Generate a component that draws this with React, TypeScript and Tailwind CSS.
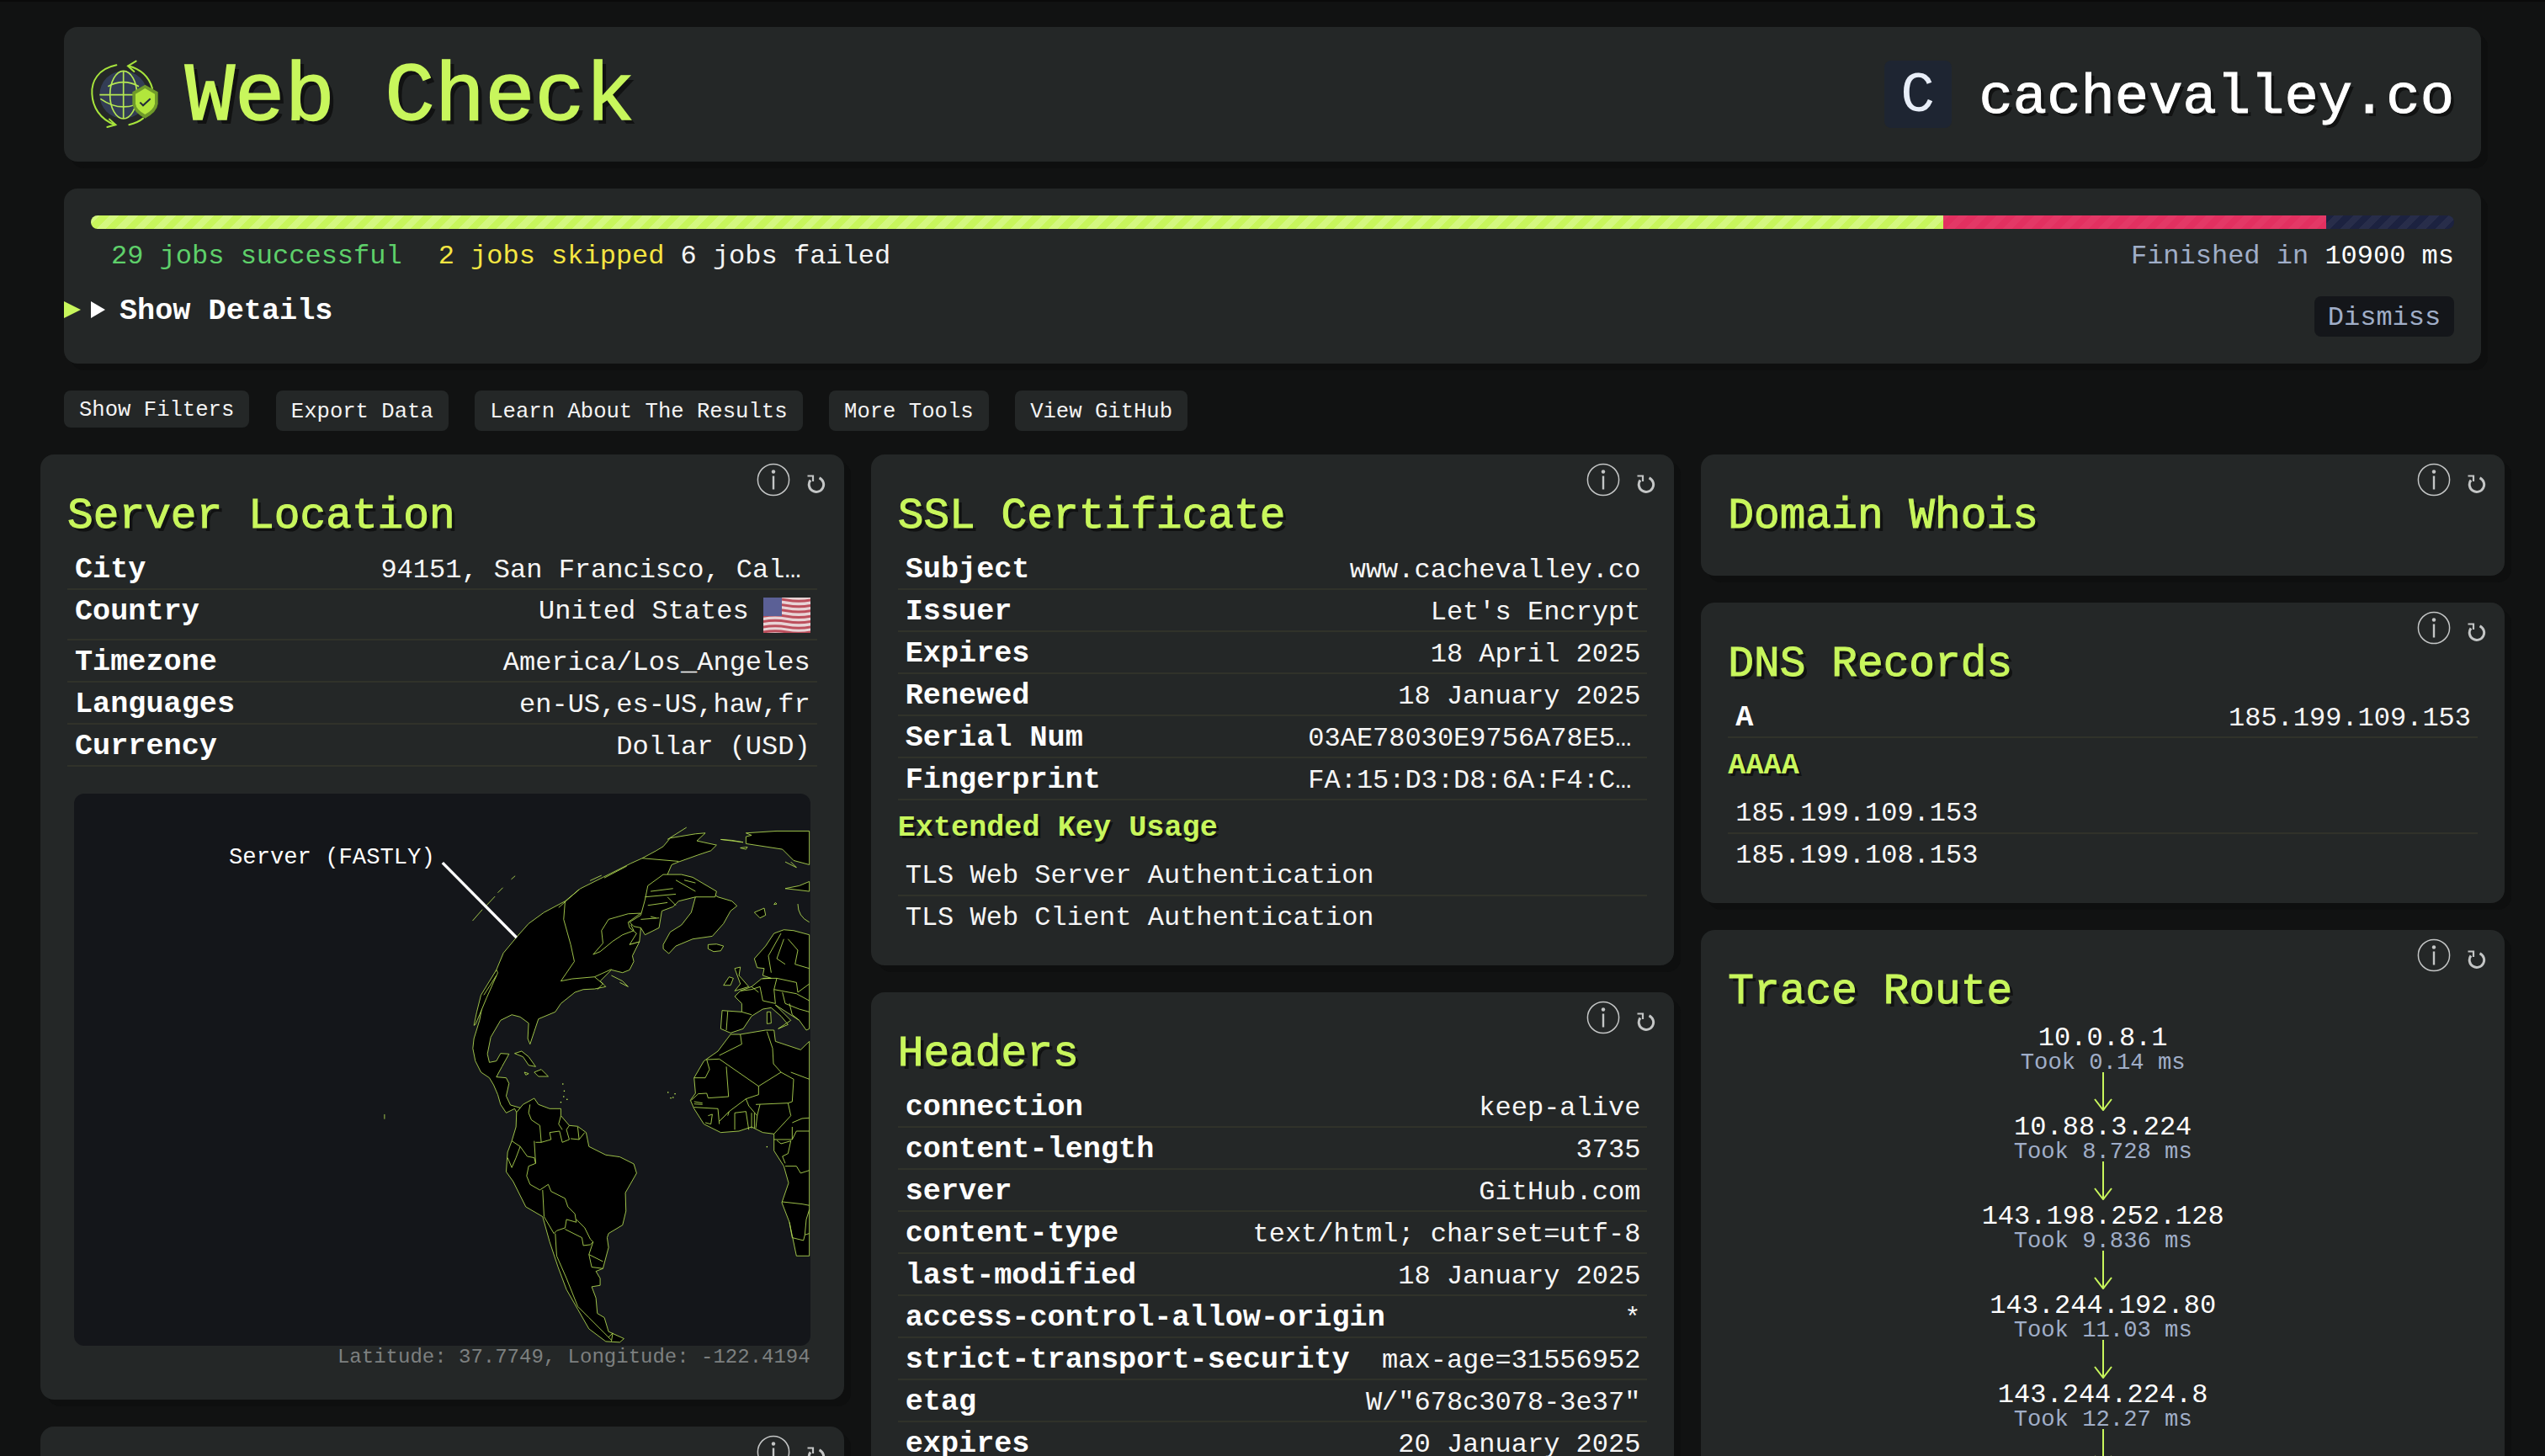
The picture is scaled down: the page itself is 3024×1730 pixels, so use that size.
import React from "react";

const MONO = "font-['Liberation_Mono',monospace]";

function CardIcons() {
  return (
    <>
      <svg viewBox="0 0 40 40" className="absolute right-[64px] top-[10px] h-[40px] w-[40px]">
        <circle cx="20" cy="20" r="18.6" fill="none" stroke="#c4c6c6" strokeWidth="1.5" />
        <circle cx="20" cy="10.5" r="2.2" fill="#c4c6c6" />
        <rect x="18.8" y="15.5" width="2.4" height="16" fill="#c4c6c6" />
      </svg>
      <svg viewBox="0 0 24 24" className="absolute right-[21px] top-[22px] h-[24px] w-[24px]">
        <path d="M15.5 5.8 A8.7 8.7 0 1 1 5 8.5" fill="none" stroke="#c4c6c6" strokeWidth="3" />
        <path d="M1.5 3.5 H8 V10" fill="none" stroke="#c4c6c6" strokeWidth="2.2" />
      </svg>
    </>
  );
}

function Row({ k, v, last, tall, cut }: { k?: string; v?: string; last?: boolean; tall?: boolean; cut?: boolean }) {
  return (
    <div
      className={`flex items-baseline justify-between pl-[9px] pr-[8px] pt-[8px] text-[32px] leading-[36px] text-[#f6f6f6] ${
        last ? "" : "border-b-2 border-[#30322a]"
      } ${tall ? "h-[60px]" : "h-[50px]"}`}
    >
      {k && <span className="text-[35.2px] font-bold text-white">{k}</span>}
      <span className={cut ? "mr-[11px]" : ""}>{v}</span>
    </div>
  );
}

function Card({ title, children, className }: { title?: string; children?: React.ReactNode; className?: string }) {
  return (
    <div className={`relative rounded-[16px] bg-[#242727] px-[32px] pb-[32px] shadow-[8px_8px_0_#0e0f0f] ${className ?? ""}`}>
      <CardIcons />
      <div className="h-[111px] pt-[44px]">
        {title && (
          <h2 className="text-[51.2px] leading-[58px] text-[#c8f65c] [-webkit-text-stroke:1px_#c8f65c] [text-shadow:4px_4px_0_#111212]">{title}</h2>
        )}
      </div>
      {children}
    </div>
  );
}

function SubHead({ children }: { children: React.ReactNode }) {
  return (
    <div className="flex h-[64px] items-center pt-[2px]">
      <h3 className="text-[35.2px] font-bold leading-[40px] text-[#c8f65c] [text-shadow:3px_3px_0_#111212]">{children}</h3>
    </div>
  );
}

function Logo() {
  return (
    <svg viewBox="75 90 260 250" className="h-[83.3px] w-[86.7px] shrink-0">
      <circle cx="200" cy="218" r="85" fill="#333d55" />
      <g fill="none" stroke="#b5e853" strokeWidth="5">
        <line x1="200" y1="133" x2="200" y2="303" />
        <ellipse cx="200" cy="218" rx="48" ry="85" />
        <line x1="115" y1="218" x2="285" y2="218" />
        <path d="M145 188 Q200 158 255 188" />
        <path d="M118 232 Q200 290 282 232" />
      </g>
      <g fill="none" stroke="#a7e43c" strokeWidth="6" strokeLinecap="round">
        <path d="M175 112 C110 125 85 170 88 215 C90 260 115 305 170 325" />
        <path d="M150 305 L172 325 L142 333" />
        <path d="M218 115 C255 125 290 150 303 195" />
        <path d="M245 98 L216 115 L238 135" />
        <path d="M220 325 C240 320 258 312 270 302" />
      </g>
      <path d="M277 182 L323 208 V250 Q320 280 277 302 Q235 280 232 250 V208 Z" fill="#6f9a2a" />
      <path d="M277 195 L312 215 V250 Q308 272 277 288 Q246 272 243 250 V215 Z" fill="#b2e63c" />
      <path d="M259 245 L270 256 L296 232" fill="none" stroke="#222a3a" strokeWidth="6" />
    </svg>
  );
}

function Flag() {
  return (
    <svg viewBox="0 0 56 42" className="absolute right-[8px] top-[9px] h-[42px] w-[56px]">
      <rect width="56" height="42" fill="#e8d4d6" />
      {[0, 6.4, 12.8, 19.2, 25.6, 32, 38].map((y) => (
        <path key={y} d={`M0 ${y + 1.5} Q14 ${y - 1} 28 ${y + 1.5} T56 ${y + 1.5} V${y + 4.5} Q42 ${y + 7} 28 ${y + 4.5} T0 ${y + 4.5} Z`} fill="#bc4f5c" />
      ))}
      <rect width="22" height="22" fill="#5b6096" />
    </svg>
  );
}

const LAND = [
  // hudson bay area, filled
  "M495 525 L625 490 L660 480 L668 400 L620 380 L550 400 L525 440 L530 485 Z",
  // north america
  "M670 182 L630 200 L530 250 L450 290 L395 335 L320 375 L265 415 L225 460 L175 520 L150 580 L105 680 L90 760 L70 825 L66 860 L75 905 L95 945 L125 965 L140 990 L155 1025 L165 1060 L185 1090 L215 1075 L226 1095 L235 1072 L200 1062 L185 1030 L195 985 L185 965 L150 962 L170 925 L195 880 L165 878 L150 905 L125 910 L118 880 L130 820 L165 760 L205 740 L235 748 L265 770 L262 825 L270 845 L285 800 L300 755 L360 730 L380 700 L430 660 L460 650 L500 648 L540 640 L520 620 L560 580 L600 590 L625 580 L640 550 L635 530 L660 480 L625 490 L650 450 L625 430 L620 410 L665 378 L620 380 L550 400 L525 440 L530 485 L495 525 L520 515 L565 478 L600 455 L640 440 L630 420 L668 400 L680 340 L700 300 L760 240 L775 205 L800 195 L870 170 L915 155 L935 135 L865 120 L895 92 L860 95 L770 110 L745 140 L720 155 Z",
  // greenland
  "M745 505 L765 522 L790 495 L850 470 L920 460 L960 415 L985 370 L1008 352 L990 335 L940 320 L900 295 L860 320 L845 375 L810 420 L770 445 L745 490 Z",
  // europe
  "M1266 455 L1210 440 L1175 437 L1140 450 L1110 495 L1070 540 L1080 572 L1105 575 L1100 600 L1130 610 L1095 612 L1060 640 L1020 655 L1000 675 L1025 700 L1025 730 L955 725 L950 790 L985 805 L1030 790 L1060 745 L1100 720 L1130 715 L1165 745 L1190 775 L1155 790 L1200 760 L1145 705 L1230 760 L1255 795 L1266 790 Z",
  // africa
  "M985 810 L1020 810 L1110 795 L1140 795 L1145 835 L1235 865 L1266 835 L1266 1600 L1220 1600 L1195 1480 L1168 1410 L1192 1340 L1175 1280 L1140 1225 L1140 1165 L1100 1160 L1060 1140 L1015 1155 L950 1160 L890 1130 L855 1075 L842 1045 L860 1020 L855 965 L890 905 L940 870 Z",
  // south america
  "M222 1088 L245 1060 L285 1038 L300 1060 L340 1075 L380 1075 L380 1100 L410 1135 L440 1138 L470 1160 L480 1210 L540 1240 L590 1247 L640 1272 L650 1305 L610 1375 L612 1440 L600 1490 L550 1520 L545 1535 L550 1570 L530 1645 L505 1655 L520 1680 L520 1705 L490 1710 L505 1750 L510 1805 L535 1820 L550 1870 L605 1895 L590 1908 L540 1905 L480 1860 L440 1790 L400 1720 L370 1640 L340 1550 L315 1460 L255 1425 L210 1335 L185 1300 L190 1230 L205 1190 L220 1140 Z",
  // russia top
  "M1040 92 L1060 100 L1040 105 L1040 130 L1170 150 L1210 190 L1266 205 L1266 85 L1150 85 Z",
  // arctic islands
  "M690 280 L745 240 L810 240 L850 250 L935 300 L930 320 L860 320 L800 335 L780 355 L740 370 L730 430 L680 455 L665 430 L640 425 L625 410 L665 385 L680 330 Z",
  "M905 490 L935 488 L960 495 L950 512 L925 515 L905 505 Z",
  "M215 878 L240 870 L265 890 L290 925 L265 920 L245 890 Z",
  "M285 945 L310 935 L335 960 L300 960 Z",
  "M250 945 L265 950 L255 955 Z",
  "M1000 575 L1020 570 L1015 600 L1050 640 L1000 655 L1020 630 Z",
  "M960 635 L980 605 L995 610 L985 635 Z",
  "M1070 375 L1105 360 L1110 385 L1090 395 Z",
  "M950 115 L1030 125 L990 118 Z",
  "M1180 290 L1230 280 L1266 265 L1266 300 L1225 295 Z",
  "M1115 730 L1128 730 L1130 770 L1115 772 Z",
  "M1145 340 L1150 345 L1140 347 Z",
  "M1020 145 L1045 142 L1040 150 Z",
  "M70 778 L80 730 L95 670 L150 580 L155 590 L115 680 L90 740 L75 775 Z",
];

const LINES = [
  "M395 335 L390 400 L415 490 L428 550 L380 620 L420 612 L500 605 L560 578",
  "M670 182 L800 193",
  "M500 605 L530 630 L510 650",
  "M560 600 L600 620 L620 640 L590 625",
  "M105 670 L150 600",
  "M700 300 L780 290 M680 320 L790 310 M760 320 L790 350 M790 260 L860 300 M820 260 L860 270 M690 350 L760 340 M665 400 L730 395 M700 390 L720 395",
  "M1165 450 L1120 530 L1130 590 M1175 470 L1150 540 L1180 560 M1190 470 L1225 510 L1215 560 L1266 575",
  "M1100 610 L1150 610 L1220 625 L1225 660 L1266 630 M1090 640 L1100 690 L1145 700 L1140 650 L1220 665 L1266 690 M1150 610 L1140 650 M1170 660 L1180 700 L1230 720 L1266 730 M1195 700 L1205 740 L1230 760",
  "M1025 730 L1060 740 M975 728 L970 795 M1020 655 L1060 650 L1090 640 M1060 640 L1085 660",
  // africa
  "M945 898 L900 900 L910 935 L895 965 L855 965 M945 898 L1085 995 L1165 945 L1210 970 L1205 1050 L1190 1055 L1200 1100 L1140 1165",
  "M970 925 L978 1032 L905 1037 L900 1020 L870 1022 L845 1045",
  "M1085 995 L1085 1025 L1040 1040 L980 1085 L975 1100 M1040 1040 L1050 1065 L1080 1100 L1075 1145 M1020 810 L1025 845 L945 885 M1115 800 L1135 860 L1138 915 L1165 945 M1200 945 L1266 970",
  "M855 1070 L940 1075 L945 1130 M905 1100 L920 1095 L915 1130 L895 1125 M1000 1090 L1000 1150 M1000 1090 L1040 1085 L1050 1150 M1060 1090 L1060 1145 M1070 1090 L1070 1145 M1075 1060 L1190 1055 M1080 1100 L1090 1060",
  "M945 1120 L980 1085 M855 1050 L885 1055 M855 1058 L885 1060",
  "M1140 1185 L1205 1185 L1220 1155 L1266 1155 M1150 1188 L1165 1200 L1200 1190 L1190 1235 L1170 1245 L1180 1270 M1180 1280 L1220 1280 L1235 1305 L1266 1295 M1168 1407 L1240 1415 L1266 1420 M1266 1435 L1255 1470 L1250 1525 L1266 1520 M1195 1480 L1205 1535 L1245 1545 L1250 1525 M1205 1125 L1240 1110 L1266 1108 M1205 1185 L1205 1140",
  // south america
  "M205 1190 L235 1210 L220 1250 L205 1285 L190 1250 M235 1210 L260 1245 L285 1250 L290 1270 L265 1280 L258 1315 L270 1345 L305 1365 L335 1345 L345 1370 L395 1395 L405 1425 L430 1450 L435 1480 L400 1470 L395 1500 L365 1510 L355 1520",
  "M395 1505 L455 1535 L460 1563 L485 1560 L495 1550 L480 1595 L530 1620 M480 1595 L490 1640 L530 1645 M315 1365 L320 1460 L355 1520 M360 1520 L365 1600 L400 1680 L440 1780 L480 1820 L535 1875 L560 1900 M435 1470 L465 1500 L485 1540 L495 1550",
  "M270 1060 L265 1090 L275 1115 L305 1135 L310 1195 L345 1185 L340 1160 L375 1155 L385 1195 L410 1185 L400 1150 L410 1135 M380 1100 L372 1130 L385 1150 M290 1195 L310 1195 M285 1190 L290 1270 M415 1182 L445 1185 L440 1140 M445 1185 L465 1160",
  "M550 1890 L565 1875 L560 1905",
  // globe edge streaks
  "M65 405 L100 365 M115 350 L145 318 M155 305 L173 287 M203 257 L217 245",
  "M-249 1095 L-249 1112",
  "M484 262 L525 243 M535 252 L615 210 M372 358 L445 293 M760 115 L828 72",
  "M1225 345 Q1225 390 1266 410",
  "M1180 195 L1220 215 L1200 195",
];

const DOTS: [number, number][] = [
  [385, 985], [390, 1010], [388, 1030], [400, 1040], [378, 1050], [760, 1015], [785, 1020], [770, 1035], [778, 1033], [1113, 1209],
];

function WorldMap() {
  return (
    <div className="relative mx-[8px] h-[656px] overflow-hidden rounded-[12px] bg-[#14161a]">
      <svg viewBox="0 0 875 656" className="absolute inset-0 h-full w-full">
        <g transform="translate(452 16) scale(0.33333)">
          <path d="M495 525 L625 490 L660 480 L668 400 L620 380 L550 400 L525 440 L530 485 Z" fill="#000" />
          {LAND.map((d, i) => (
            <path key={i} d={d} fill="#000" stroke="#b4dc54" strokeWidth="2.6" strokeLinejoin="round" />
          ))}
          {LINES.map((d, i) => (
            <path key={i} d={d} fill="none" stroke="#b4dc54" strokeWidth="2.6" />
          ))}
          {DOTS.map(([x, y], i) => (
            <rect key={i} x={x} y={y} width="4" height="4" fill="#c8f65c" />
          ))}
        </g>
        <line x1="438" y1="82" x2="526" y2="171" stroke="#fff" strokeWidth="3.4" />
      </svg>
      <span className="absolute left-[184px] top-[60px] text-[27.2px] leading-[32px] text-white">Server (FASTLY)</span>
    </div>
  );
}

function Hop({ ip, ms }: { ip: string; ms: string }) {
  return (
    <div className="flex flex-col items-center">
      <div className="h-[32px] text-[32px] leading-[36px] text-white">{ip}</div>
      <div className="h-[28px] text-[27.2px] leading-[30px] text-[#a0aec8]">{ms}</div>
      <svg viewBox="0 0 24 46" className="-mt-[2px] h-[46px] w-[24px]">
        <line x1="12" y1="0" x2="12" y2="44" stroke="#c8f65c" strokeWidth="2" />
        <path d="M2 32 L12 45 L22 32" fill="none" stroke="#c8f65c" strokeWidth="2" />
      </svg>
      <div className="h-[2px]" />
    </div>
  );
}

const BTN = "flex items-center rounded-[8px] bg-[#242727] px-[18px] pt-[4px]";

export default function App() {
  return (
    <div className={`h-[1730px] w-[3024px] overflow-hidden bg-[#111212] ${MONO}`}>
      <div className="h-[2px] bg-[#0a0a0a]" />
      <div className="mx-[76px] mt-[30px] flex h-[160px] items-center justify-between rounded-[16px] bg-[#242727] pl-[29px] pr-[32px] shadow-[8px_8px_0_#0e0f0f]">
        <div className="flex items-center">
          <Logo />
          <h1 className="ml-[28px] mt-[8px] text-[99px] leading-[110px] text-[#c8f65c] [-webkit-text-stroke:1.5px_#c8f65c] [text-shadow:5px_5px_0_#111212]">Web Check</h1>
        </div>
        <div className="flex items-center">
          <div className="flex h-[80px] w-[80px] items-center justify-center rounded-[8px] bg-[#1e2532] pt-[4px] text-[68px] leading-[80px] text-[#e8eef8]">C</div>
          <div className="ml-[33px] mt-[8px] text-[67.2px] leading-[80px] text-white [-webkit-text-stroke:1px_#fff] [text-shadow:4px_4px_0_#111212]">cachevalley.co</div>
        </div>
      </div>

      <div className="mx-[76px] mt-[32px] h-[208px] rounded-[16px] bg-[#242727] pt-[32px] shadow-[8px_8px_0_#0e0f0f]">
        <div className="mx-[32px] flex h-[16px] overflow-hidden rounded-[8px]">
          <div className="h-full w-[2201px] bg-[#c8f65c] bg-[repeating-linear-gradient(-45deg,transparent_0_8px,rgba(255,255,255,0.22)_8px_16px)]" />
          <div className="h-full w-[455px] bg-[#e23060] bg-[repeating-linear-gradient(-45deg,transparent_0_8px,rgba(255,255,255,0.04)_8px_16px)]" />
          <div className="h-full flex-1 bg-[#1c2240] bg-[repeating-linear-gradient(-45deg,transparent_0_8px,rgba(255,255,255,0.05)_8px_16px)]" />
        </div>
        <div className="mt-[15px] flex justify-between pl-[56px] pr-[32px] text-[32px] leading-[36px]">
          <div className="flex">
            <span className="text-[#5ed06a]">29 jobs successful</span>
            <span className="ml-[43px] text-[#f5e642]">2 jobs skipped</span>
            <span className="ml-[19px] text-[#f4f4f4]">6 jobs failed</span>
          </div>
          <div>
            <span className="text-[#a0aec8]">Finished in </span>
            <span className="text-white">10900 ms</span>
          </div>
        </div>
        <div className="mt-[29px] flex items-start justify-between pr-[32px]">
          <div className="flex items-center">
            <svg viewBox="0 0 20 20" className="-mt-[4px] h-[20px] w-[20px]"><path d="M0 0 L20 10 L0 20 Z" fill="#c8f65c" /></svg>
            <svg viewBox="0 0 17 20" className="-mt-[4px] ml-[12px] h-[20px] w-[17px]"><path d="M0 0 L17 10 L0 20 Z" fill="#fff" /></svg>
            <span className="ml-[17px] text-[35.2px] font-bold leading-[36px] text-white">Show Details</span>
          </div>
          <div className="flex h-[48px] w-[166px] items-center justify-center rounded-[8px] bg-[#14161a] pt-[4px] text-[32px] text-[#a0aec8]">Dismiss</div>
        </div>
      </div>

      <div className="mx-[76px] mt-[32px] flex items-start gap-[31.5px] text-[25.6px] text-[#f4f4f4]">
        <div className={`${BTN} h-[44px]`}>Show Filters</div>
        <div className={`${BTN} h-[48px]`}>Export Data</div>
        <div className={`${BTN} h-[48px]`}>Learn About The Results</div>
        <div className={`${BTN} h-[48px]`}>More Tools</div>
        <div className={`${BTN} h-[48px]`}>View GitHub</div>
      </div>

      <div className="mx-[48px] mt-[28px] flex items-start gap-[32px]">
        <div className="flex flex-1 flex-col gap-[32px]">
          <Card title="Server Location">
            <Row k="City" v="94151, San Francisco, Cal…" cut />
            <div className="relative">
              <Row k="Country" tall />
              <span className="absolute right-[81px] top-[8px] text-[32px] leading-[36px] text-[#f6f6f6]">United States</span>
              <Flag />
            </div>
            <Row k="Timezone" v="America/Los_Angeles" />
            <Row k="Languages" v="en-US,es-US,haw,fr" />
            <Row k="Currency" v="Dollar (USD)" />
            <div className="mt-[32px]">
              <WorldMap />
            </div>
            <div className="mr-[8px] pt-[2px] text-right text-[24px] leading-[24px] text-[#7d8080]">Latitude: 37.7749, Longitude: -122.4194</div>
            <div className="h-[6px]" />
          </Card>
          <Card className="h-[300px]" />
        </div>

        <div className="flex flex-1 flex-col gap-[32px]">
          <Card title="SSL Certificate">
            <Row k="Subject" v="www.cachevalley.co" />
            <Row k="Issuer" v="Let's Encrypt" />
            <Row k="Expires" v="18 April 2025" />
            <Row k="Renewed" v="18 January 2025" />
            <Row k="Serial Num" v="03AE78030E9756A78E5…" cut />
            <Row k="Fingerprint" v="FA:15:D3:D8:6A:F4:C…" cut />
            <SubHead>Extended Key Usage</SubHead>
            <Row v="TLS Web Server Authentication" />
            <Row v="TLS Web Client Authentication" last />
          </Card>
          <Card title="Headers">
            <Row k="connection" v="keep-alive" />
            <Row k="content-length" v="3735" />
            <Row k="server" v="GitHub.com" />
            <Row k="content-type" v="text/html; charset=utf-8" />
            <Row k="last-modified" v="18 January 2025" />
            <Row k="access-control-allow-origin" v="*" />
            <Row k="strict-transport-security" v="max-age=31556952" />
            <Row k="etag" v={'W/"678c3078-3e37"'} />
            <Row k="expires" v="20 January 2025" />
          </Card>
        </div>

        <div className="flex flex-1 flex-col gap-[32px]">
          <Card title="Domain Whois" className="h-[144px]" />
          <Card title="DNS Records">
            <Row k="A" v="185.199.109.153" />
            <SubHead>AAAA</SubHead>
            <Row v="185.199.109.153" />
            <Row v="185.199.108.153" last />
          </Card>
          <Card title="Trace Route">
            <Hop ip="10.0.8.1" ms="Took 0.14 ms" />
            <Hop ip="10.88.3.224" ms="Took 8.728 ms" />
            <Hop ip="143.198.252.128" ms="Took 9.836 ms" />
            <Hop ip="143.244.192.80" ms="Took 11.03 ms" />
            <Hop ip="143.244.224.8" ms="Took 12.27 ms" />
          </Card>
        </div>
      </div>
    </div>
  );
}
